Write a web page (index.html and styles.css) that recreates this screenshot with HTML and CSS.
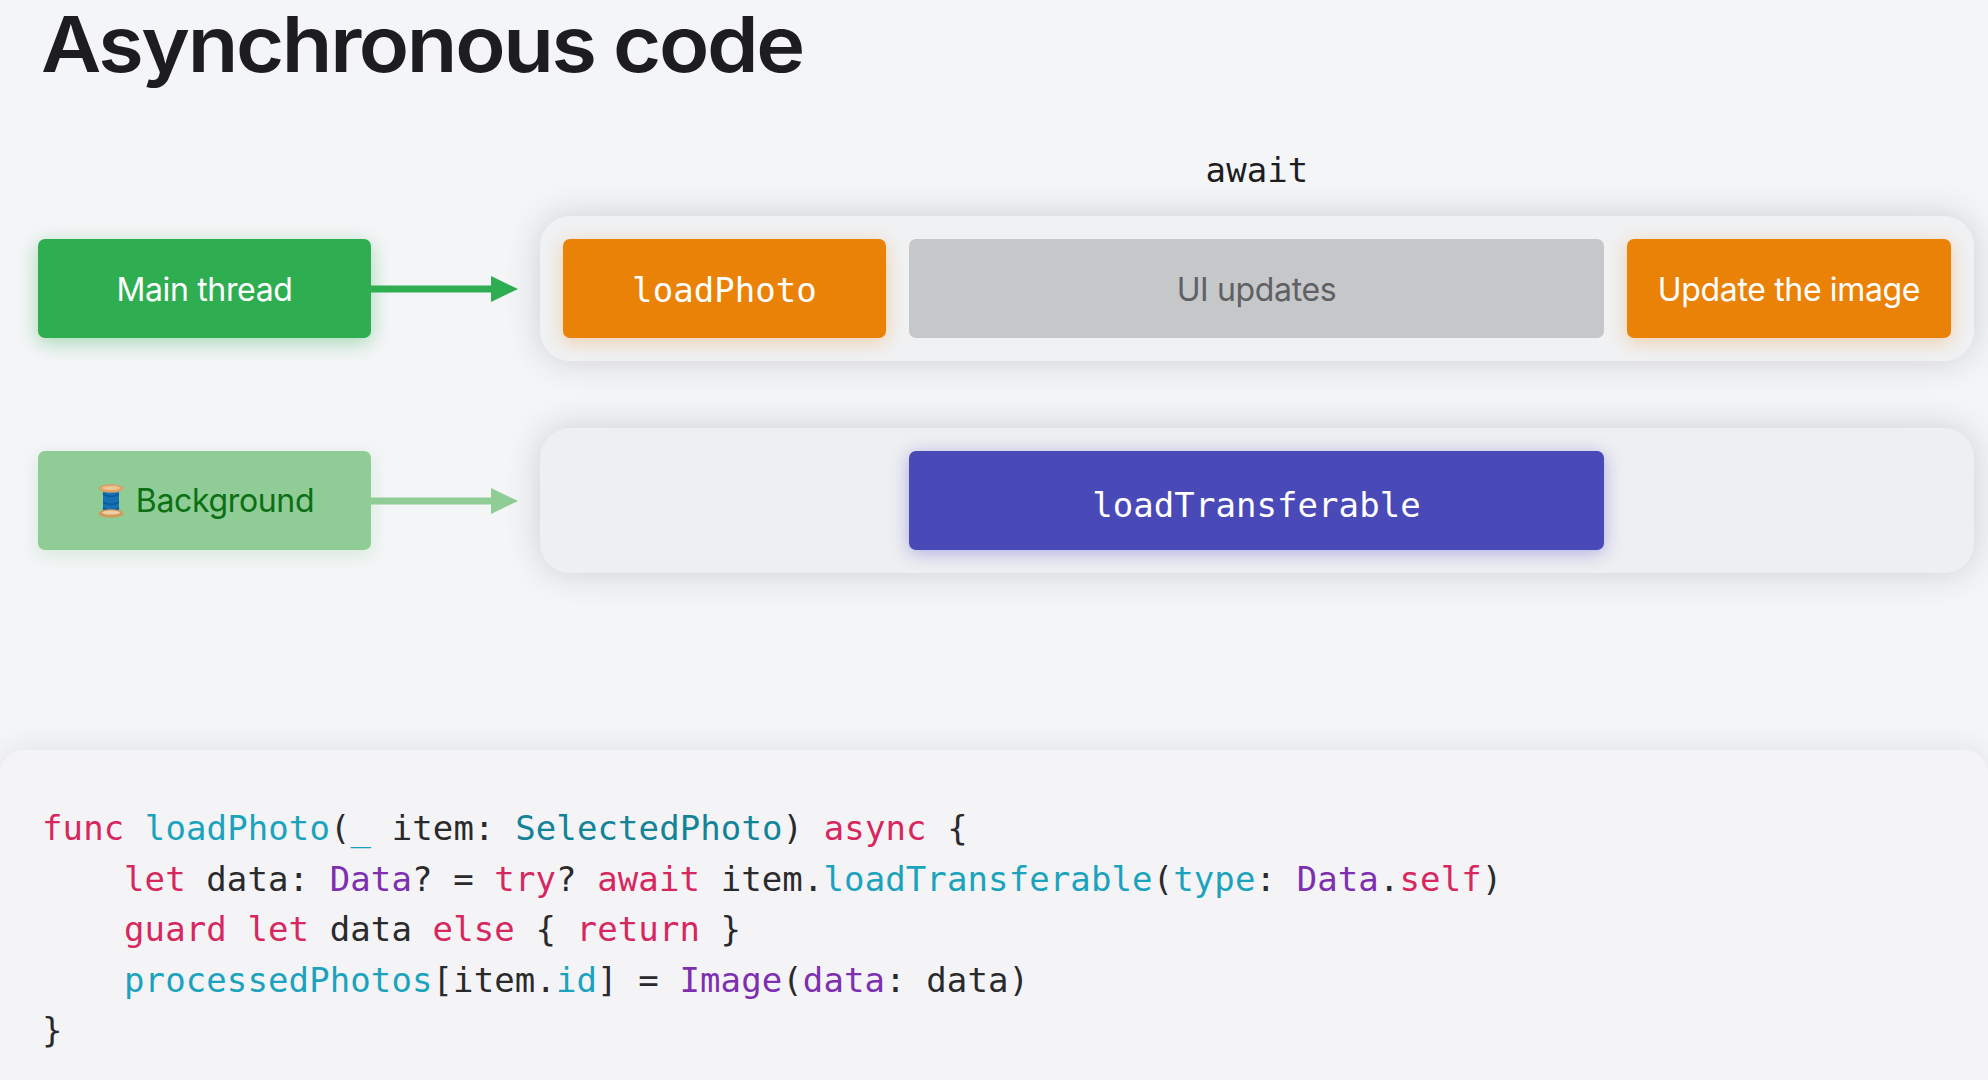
FILE: index.html
```html
<!DOCTYPE html>
<html lang="en">
<head>
<meta charset="utf-8">
<title>Asynchronous code</title>
<link rel="stylesheet" href="styles.css">
</head>
<body>
<main class="slide">
  <h1 class="title"><span class="title-text">Asynchronous code</span></h1>
  <section class="diagram">
    <div class="await-label mono">await</div>
    <div class="lane lane-first">
      <div class="thread thread-main">Main thread</div>
      <svg class="arrow arrow-main" width="147" height="28" viewBox="0 0 147 28" aria-hidden="true">
        <path d="M0 10.5H120V1L147 14L120 27V17.5H0Z"/>
      </svg>
      <div class="track track-main">
        <div class="block block-orange mono">loadPhoto</div>
        <div class="block block-gray">UI updates</div>
        <div class="block block-orange">Update the image</div>
      </div>
    </div>
    <div class="lane">
      <div class="thread thread-bg">
        <svg class="spool" width="26" height="34" viewBox="0 0 26 34" aria-hidden="true">
          <rect x="5" y="4" width="16" height="26" fill="#1670b5"/>
          <path d="M5 10C10 13 16 13 21 10M5 18C10 21 16 21 21 18M5 24C10 27 16 27 21 24" fill="none" stroke="#0e5a98" stroke-width="1.5"/>
          <ellipse cx="13" cy="4.5" rx="12.5" ry="4.2" fill="#d9a367"/>
          <ellipse cx="13" cy="4" rx="9" ry="2" fill="#eec493"/>
          <ellipse cx="13" cy="29.5" rx="12.5" ry="4.2" fill="#d39a5d"/>
          <ellipse cx="13" cy="28.6" rx="9" ry="2" fill="#f0cfa6"/>
        </svg>
        <span>Background</span>
      </div>
      <svg class="arrow arrow-bg" width="147" height="28" viewBox="0 0 147 28" aria-hidden="true">
        <path d="M0 10.5H120V1L147 14L120 27V17.5H0Z"/>
      </svg>
      <div class="track track-bg">
        <div class="block block-indigo mono">loadTransferable</div>
      </div>
    </div>
  </section>
  <section class="code-panel mono">
    <div class="line"><span class="kw">func</span> <span class="fn">loadPhoto</span><span>(</span><span class="fn">_</span> <span>item:</span> <span class="ty">SelectedPhoto</span><span>)</span> <span class="kw">async</span> <span>{</span></div>
    <div class="line line-in"><span class="kw">let</span> <span>data:</span> <span class="pu">Data</span><span>?</span> <span>=</span> <span class="kw">try</span><span>?</span> <span class="kw">await</span> <span>item.</span><span class="fn">loadTransferable</span><span>(</span><span class="fn">type</span><span>:</span> <span class="pu">Data</span><span>.</span><span class="kw">self</span><span>)</span></div>
    <div class="line line-in"><span class="kw">guard</span> <span class="kw">let</span> <span>data</span> <span class="kw">else</span> <span>{</span> <span class="kw">return</span> <span>}</span></div>
    <div class="line line-in"><span class="fn">processedPhotos</span><span>[item.</span><span class="fn">id</span><span>]</span> <span>=</span> <span class="pu">Image</span><span>(</span><span class="pu">data</span><span>:</span> <span>data)</span></div>
    <div class="line"><span>}</span></div>
  </section>
</main>
</body>
</html>
```

FILE: styles.css
```css
* {
  box-sizing: border-box;
}

html,
body {
  margin: 0;
  height: 100%;
}

body {
  background: #f4f5f7;
  font-family: Inter, "Liberation Sans", sans-serif;
  overflow: hidden;
}

.mono {
  font-family: "DejaVu Sans Mono", "Liberation Mono", monospace;
  font-size: 34px;
  letter-spacing: 0.1px;
}

.slide {
  display: flex;
  flex-direction: column;
  height: 1080px;
}

.title {
  margin: 0;
  height: 146px;
  padding: 0 0 0 41px;
  font-size: 77px;
  line-height: 88px;
  font-weight: 600;
  color: #1d1d1f;
}

.title-text {
  display: inline-block;
  letter-spacing: -2.2px;
  transform: scaleX(1.075);
  transform-origin: left center;
}

.diagram {
  display: flex;
  flex-direction: column;
  gap: 67px;
  padding: 0 14px 0 38px;
  position: relative;
}

.await-label {
  position: absolute;
  top: 4px;
  left: 540px;
  right: 14px;
  margin: 0;
  text-align: center;
  line-height: 40px;
  color: #1d1d1f;
}

.lane {
  display: flex;
  align-items: center;
}

.lane-first {
  margin-top: 70px;
}

.lane-first .thread,
.lane-first .block {
  padding-top: 2px;
}

.thread {
  width: 333px;
  height: 99px;
  flex: none;
  display: flex;
  align-items: center;
  justify-content: center;
  gap: 12px;
  border-radius: 7px;
  font-size: 32px;
  letter-spacing: -0.35px;
}

.thread-main {
  background: #2eae50;
  color: #fff;
  box-shadow: 0 5px 20px rgba(46, 174, 80, 0.4);
}

.thread-bg {
  padding-left: 3px;
  background: #8fcc96;
  color: #0b6f14;
  box-shadow: 0 5px 18px rgba(143, 204, 150, 0.3);
}

.spool {
  flex: none;
}

.arrow {
  flex: none;
  margin-right: 22px;
}

.arrow-main {
  fill: #2eae50;
}

.arrow-bg {
  fill: #8fcc96;
}

.track {
  flex: 1;
  height: 145px;
  padding: 23px;
  border-radius: 30px;
  display: grid;
  grid-template-columns: 323px 695px 324px;
  gap: 23px;
  box-shadow: 0 0 34px rgba(60, 60, 80, 0.2);
}

.track-main {
  background: #f0f1f2;
}

.track-bg {
  background: #eeeff1;
}

.block {
  height: 99px;
  border-radius: 7px;
  display: flex;
  align-items: center;
  justify-content: center;
  font-size: 32px;
  letter-spacing: -0.35px;
  color: #fff;
}

.block.mono {
  font-size: 34px;
  letter-spacing: 0.06px;
}

.block-orange {
  background: #eb8208;
  box-shadow: 0 4px 18px rgba(235, 130, 8, 0.3);
}

.block-gray {
  background: #c6c7c9;
  color: #5f6063;
}

.block-indigo {
  grid-column: 2;
  padding-top: 8px;
  background: #4a49b8;
  box-shadow: 0 3px 18px rgba(74, 73, 200, 0.4);
}

.code-panel {
  margin-top: 177px;
  flex: 1;
  background: #f4f4f7;
  border-radius: 24px 24px 0 0;
  padding: 53px 0 0 42px;
  box-shadow: 0 -6px 24px rgba(60, 60, 70, 0.07);
  color: #2a2a2c;
}

.line {
  height: 50.5px;
  line-height: 50.5px;
  white-space: pre;
}

.line-in {
  padding-left: 82px;
}

.kw {
  color: #d6285f;
}

.fn {
  color: #1ba3bd;
}

.ty {
  color: #138398;
}

.pu {
  color: #7d2fb0;
}
```
